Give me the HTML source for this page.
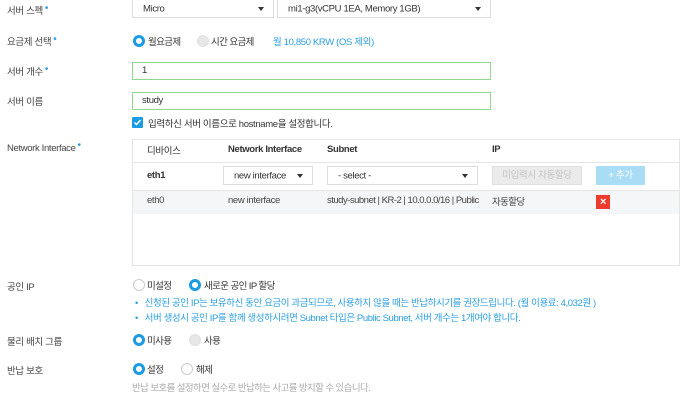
<!DOCTYPE html>
<html><head><meta charset="utf-8"><style>
body{margin:0;width:680px;height:401px;background:#fff;font-family:"Liberation Sans","Noto Sans CJK KR",sans-serif;font-size:9.5px;letter-spacing:-0.35px;color:#333;position:relative;overflow:hidden}
.a{position:absolute;white-space:nowrap}
.lbl{left:7px;color:#444}
.req:after{content:"•";color:#2b9fe0;font-size:10px;margin-left:2px;position:relative;top:-3px}
.sel{position:absolute;border:1px solid #ddd;background:#fff;box-sizing:border-box}
.sel span{position:absolute;left:10px;top:50%;transform:translateY(-50%)}
.sel i{position:absolute;right:9px;top:50%;margin-top:-2px;border-left:3.5px solid transparent;border-right:3.5px solid transparent;border-top:4px solid #333}
.inp{position:absolute;border:1px solid #8fd88f;box-sizing:border-box;left:132px;width:359px;height:18px}
.inp span{position:absolute;left:9px;top:2px}
.r{position:absolute;width:12px;height:12px;border-radius:50%;box-sizing:border-box}
.on{border:3px solid #1a9be3;background:#fff}
.off{border:1px solid #ccc;background:#fff}
.dis{background:#e6e6e6;border:1px solid #e0e0e0}
.blue{color:#2b9fe0}
.k{letter-spacing:-0.6px}
</style></head><body>
<div class="a lbl req" style="top:3px">서버 스펙</div>
<div class="sel" style="left:132px;top:-1px;width:142px;height:19px"><span>Micro</span><i></i></div>
<div class="sel" style="left:277px;top:-1px;width:214px;height:19px"><span>mi1-g3(vCPU 1EA, Memory 1GB)</span><i></i></div>

<div class="a lbl req" style="top:34px">요금제 선택</div>
<div class="r on" style="left:133px;top:35px"></div><div class="a k" style="left:148px;top:34px">월요금제</div>
<div class="r dis" style="left:197px;top:35px"></div><div class="a k" style="left:211px;top:34px">시간 요금제</div>
<div class="a blue" style="left:273px;top:34px">월 10,850 KRW (OS 제외)</div>

<div class="a lbl req" style="top:64px">서버 개수</div>
<div class="inp" style="top:62px"><span>1</span></div>
<div class="a lbl" style="top:94px">서버 이름</div>
<div class="inp" style="top:92px"><span>study</span></div>
<div class="a" style="left:132px;top:117px;width:11px;height:11px;background:#1a9be3;border-radius:1px"><svg width="11" height="11"><path d="M2.5 5.5l2 2 4-4.5" stroke="#fff" stroke-width="1.5" fill="none"/></svg></div>
<div class="a" style="left:148px;top:116px">입력하신 서버 이름으로 hostname을 설정합니다.</div>

<div class="a lbl req" style="top:143px">Network Interface</div>
<div class="a" style="left:132px;top:139px;width:548px;height:127px;border:1px solid #e5e5e5;box-sizing:border-box"></div>
<div class="a" style="left:133px;top:162px;width:546px;height:1px;background:#e5e5e5"></div>
<div class="a" style="left:133px;top:190px;width:546px;height:23px;background:#f5f6f7;border-top:1px solid #e5e5e5"></div>
<div class="a" style="left:147px;top:143px">디바이스</div>
<div class="a" style="left:228px;top:144px;font-weight:bold">Network Interface</div>
<div class="a" style="left:327px;top:144px;font-weight:bold">Subnet</div>
<div class="a" style="left:492px;top:144px;font-weight:bold">IP</div>
<div class="a" style="left:147px;top:170px;font-weight:bold">eth1</div>
<div class="sel" style="left:223px;top:166px;width:90px;height:19px"><span>new interface</span><i></i></div>
<div class="sel" style="left:327px;top:166px;width:151px;height:19px"><span>- select -</span><i></i></div>
<div class="a" style="left:492px;top:166px;width:90px;height:19px;background:#ebebeb;border:1px solid #e0e0e0;box-sizing:border-box;color:#c4c4c4;text-align:center;line-height:17px">미입력시 자동할당</div>
<div class="a" style="left:596px;top:166px;width:49px;height:19px;background:#a9dcf5;color:#fff;text-align:center;line-height:19px">+ 추가</div>
<div class="a" style="left:147px;top:195px;color:#444">eth0</div>
<div class="a" style="left:228px;top:195px;color:#444">new interface</div>
<div class="a" style="left:327px;top:195px;color:#444;letter-spacing:-0.5px">study-subnet | KR-2 | 10.0.0.0/16 | Public</div>
<div class="a k" style="left:492px;top:194px;color:#444">자동할당</div>
<div class="a" style="left:596px;top:195px;width:14px;height:14px;background:#ef3b2d;color:#fff;text-align:center;line-height:14px;font-size:11px;font-weight:bold">×</div>

<div class="a lbl" style="top:279px">공인 IP</div>
<div class="r off" style="left:133px;top:279px"></div><div class="a k" style="left:147px;top:278px">미설정</div>
<div class="r on" style="left:189px;top:279px"></div><div class="a k" style="left:204px;top:278px">새로운 공인 IP 할당</div>
<div class="a blue" style="left:135px;top:295px;font-size:9.5px;letter-spacing:-0.4px">•&nbsp;&nbsp;&nbsp;신청된 공인 IP는 보유하신 동안 요금이 과금되므로, 사용하지 않을 때는 반납하시기를 권장드립니다. (월 이용료: 4,032원 )</div>
<div class="a blue" style="left:135px;top:310px;font-size:9.5px;letter-spacing:-0.4px">•&nbsp;&nbsp;&nbsp;서버 생성시 공인 IP를 함께 생성하시려면 Subnet 타입은 Public Subnet, 서버 개수는 1개여야 합니다.</div>

<div class="a lbl" style="top:334px">물리 배치 그룹</div>
<div class="r on" style="left:133px;top:334px"></div><div class="a k" style="left:147px;top:333px">미사용</div>
<div class="r dis" style="left:189px;top:334px"></div><div class="a k" style="left:204px;top:333px">사용</div>

<div class="a lbl" style="top:363px">반납 보호</div>
<div class="r on" style="left:133px;top:363px"></div><div class="a k" style="left:147px;top:362px">설정</div>
<div class="r off" style="left:181px;top:363px"></div><div class="a k" style="left:196px;top:362px">해제</div>
<div class="a k" style="left:132px;top:380px;color:#aaa">반납 보호를 설정하면 실수로 반납하는 사고를 방지할 수 있습니다.</div>
</body></html>
